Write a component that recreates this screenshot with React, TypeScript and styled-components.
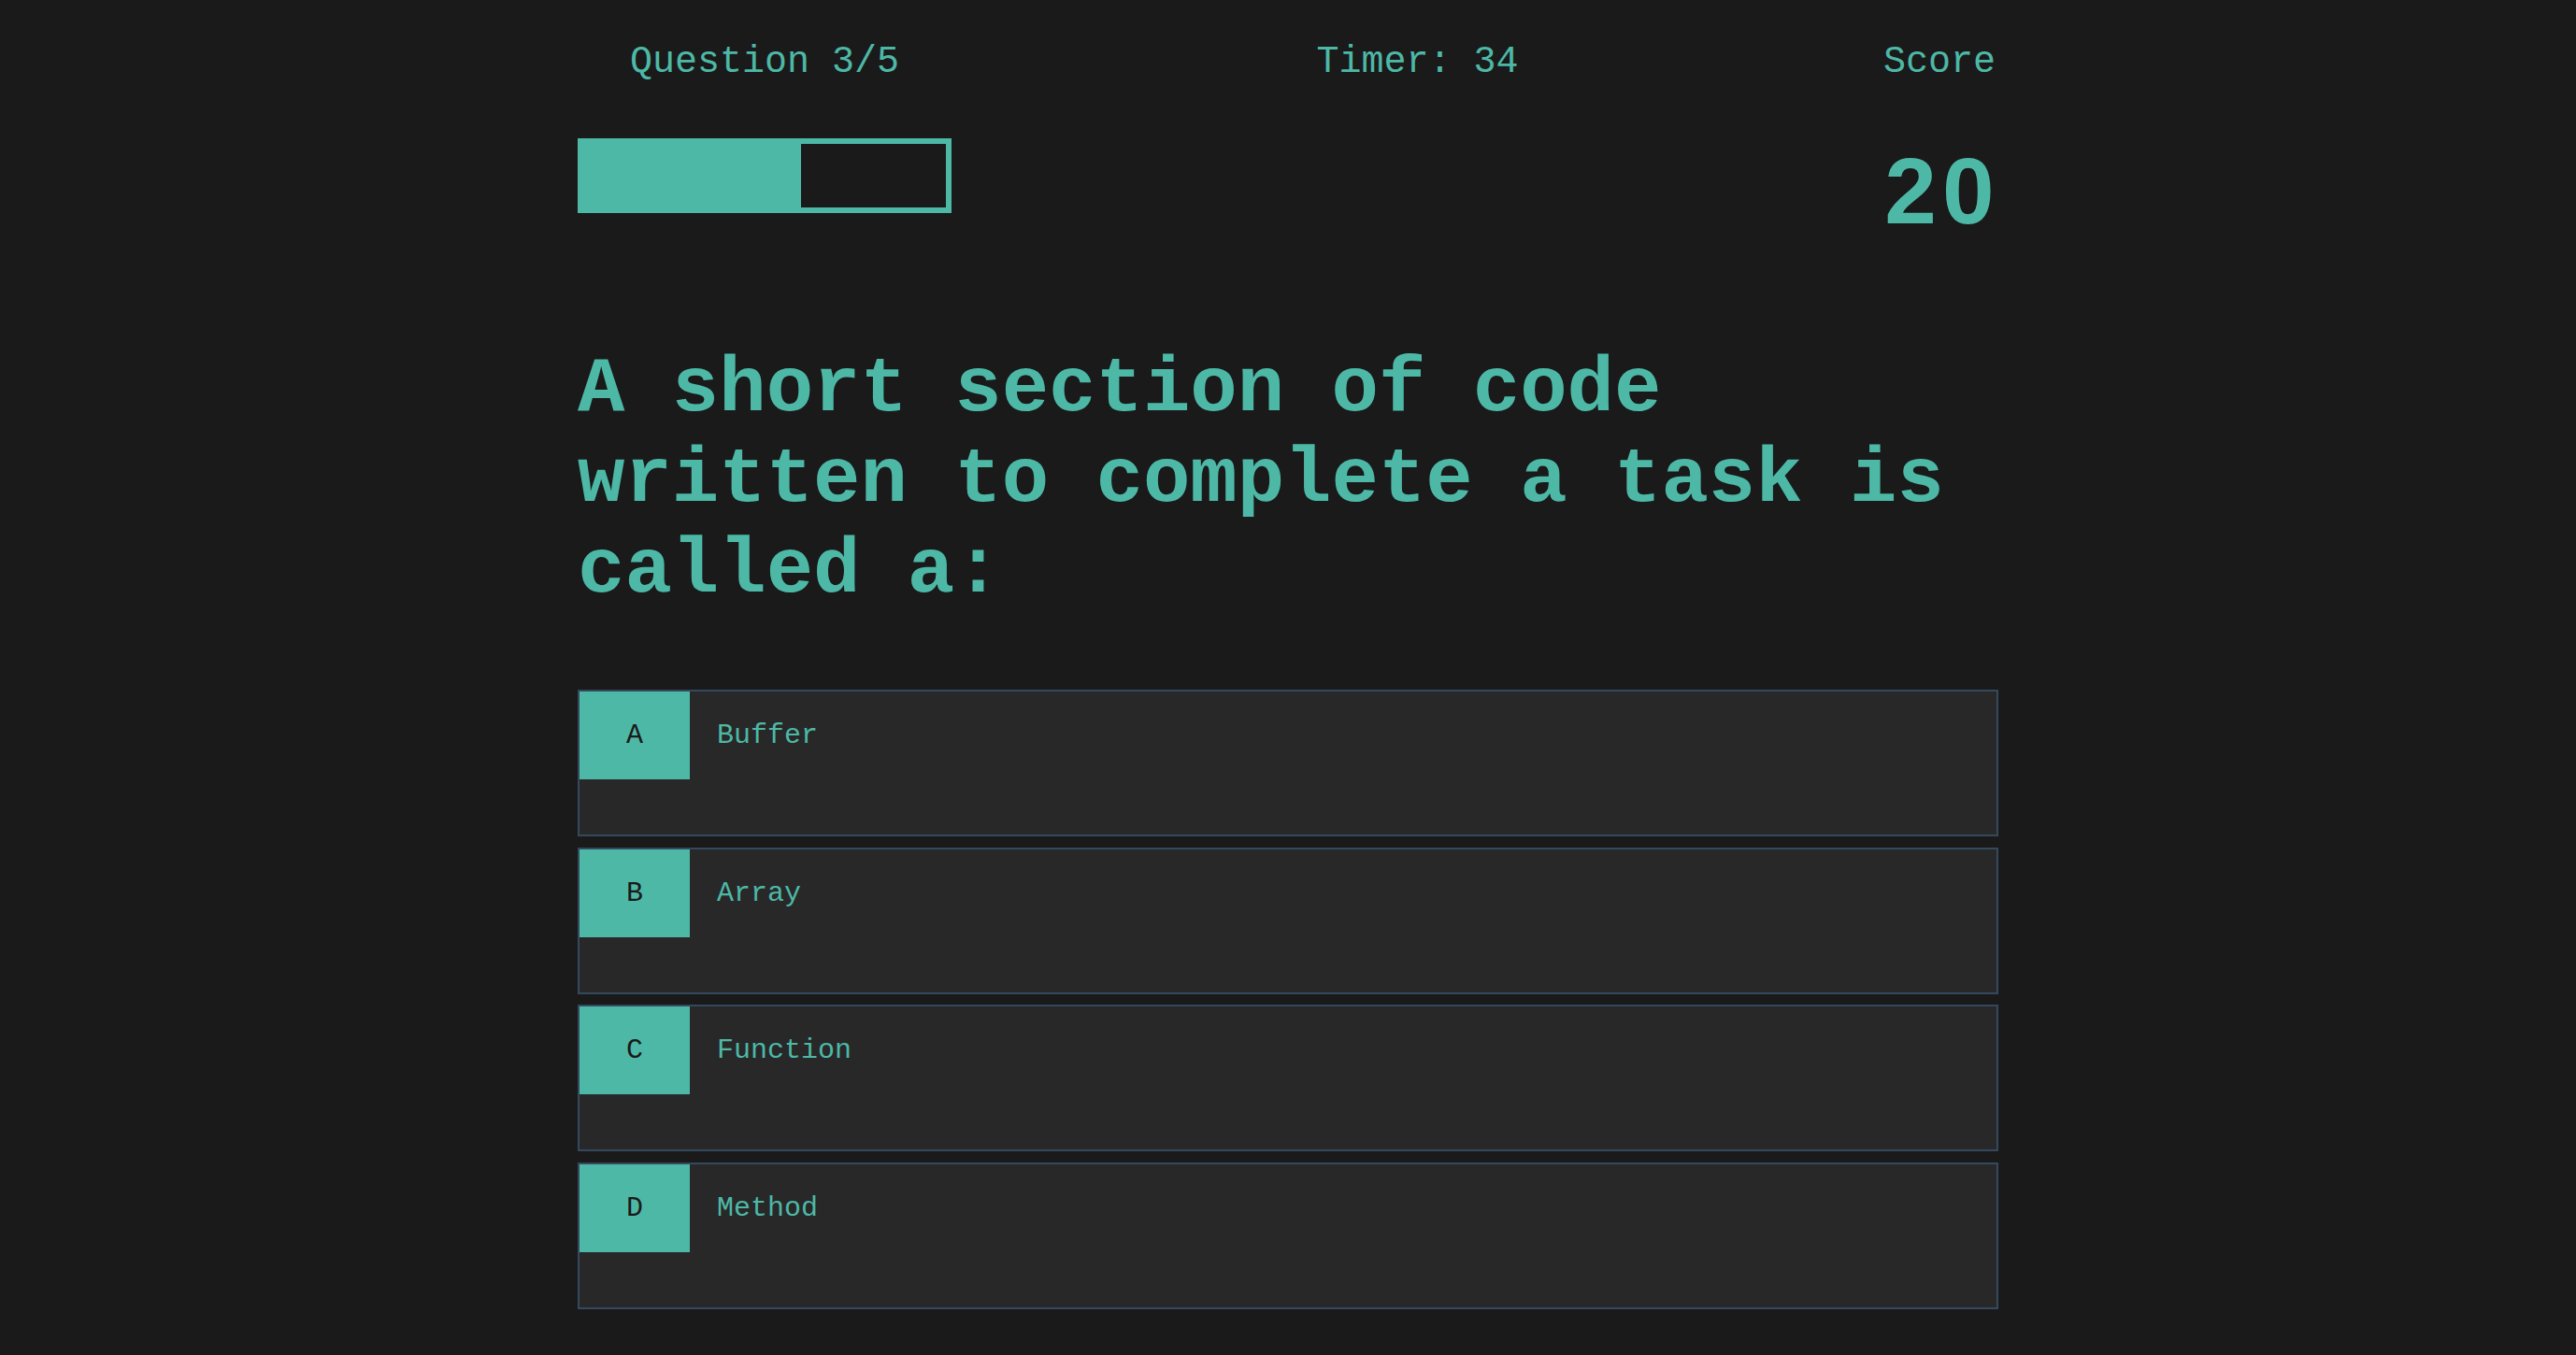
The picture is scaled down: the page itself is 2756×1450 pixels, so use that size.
import React from 'react';
import styled, { createGlobalStyle } from 'styled-components';

const GlobalStyle = createGlobalStyle`
  html, body {
    margin: 0;
    padding: 0;
    background-color: #1a1a1a;
  }
  body {
    min-height: 100vh;
    font-family: "Courier New", "Nimbus Mono PS", "FreeMono", "Liberation Mono", monospace;
  }
  * {
    box-sizing: border-box;
  }
`;

const teal = '#4db8a6';

const StyledPage = styled.div`
  width: 1520px;
  margin: 0 auto;
  padding-top: 44px;
  color: ${teal};
`;

const StyledHud = styled.header`
  display: flex;
  justify-content: space-between;
  align-items: flex-start;
  padding-right: 3px;
`;

const StyledHudColumn = styled.div<{ $width?: number }>`
  display: flex;
  flex-direction: column;
  align-items: center;
  width: ${(p) => (p.$width ? `${p.$width}px` : 'auto')};
`;

const StyledLabel = styled.div`
  font-size: 40px;
  line-height: 46px;
  white-space: nowrap;
`;

const StyledProgress = styled.div`
  width: 400px;
  height: 80px;
  margin-top: 58px;
  border: 6px solid ${teal};
  background-color: #1a1a1a;
`;

const StyledProgressFill = styled.div`
  height: 100%;
  background-color: ${teal};
`;

/* plain oval zero, like the Courier digits in the design */
const StyledScore = styled.div`
  margin-top: 56px;
  font-family: "Liberation Sans", Arial, sans-serif;
  font-weight: bold;
  font-size: 100px;
  line-height: 116px;
  letter-spacing: 6px;
  margin-right: -6px;
`;

const StyledQuestion = styled.h1`
  margin: 106px 0 79px;
  font-size: 84px;
  line-height: 97px;
  font-weight: bold;
`;

const StyledAnswers = styled.div`
  display: flex;
  flex-direction: column;
  gap: 11.5px;
`;

const StyledAnswer = styled.div`
  height: 157px;
  border: 2px solid #34495e;
  background-color: #282828;
`;

const StyledAnswerRow = styled.div`
  display: flex;
  align-items: center;
  height: 94px;
`;

const StyledLetter = styled.div`
  display: flex;
  align-items: center;
  justify-content: center;
  width: 118px;
  height: 94px;
  background-color: ${teal};
  color: #1a1a1a;
  font-size: 30px;
`;

const StyledAnswerText = styled.span`
  margin-left: 29px;
  font-size: 30px;
  line-height: 34px;
`;

const answers = [
  { letter: 'A', text: 'Buffer' },
  { letter: 'B', text: 'Array' },
  { letter: 'C', text: 'Function' },
  { letter: 'D', text: 'Method' },
];

const App = () => {
  const current = 3;
  const total = 5;

  return (
    <>
      <GlobalStyle />
      <StyledPage>
        <StyledHud>
          <StyledHudColumn $width={400}>
            <StyledLabel>Question {current}/{total}</StyledLabel>
            <StyledProgress>
              <StyledProgressFill style={{ width: `${(current / total) * 100}%` }} />
            </StyledProgress>
          </StyledHudColumn>
          <StyledHudColumn>
            <StyledLabel>Timer: 34</StyledLabel>
          </StyledHudColumn>
          <StyledHudColumn>
            <StyledLabel>Score</StyledLabel>
            <StyledScore>20</StyledScore>
          </StyledHudColumn>
        </StyledHud>

        <StyledQuestion>
          A short section of code written to complete a task is called a:
        </StyledQuestion>

        <StyledAnswers>
          {answers.map((a) => (
            <StyledAnswer key={a.letter}>
              <StyledAnswerRow>
                <StyledLetter>{a.letter}</StyledLetter>
                <StyledAnswerText>{a.text}</StyledAnswerText>
              </StyledAnswerRow>
            </StyledAnswer>
          ))}
        </StyledAnswers>
      </StyledPage>
    </>
  );
};

export default App;
